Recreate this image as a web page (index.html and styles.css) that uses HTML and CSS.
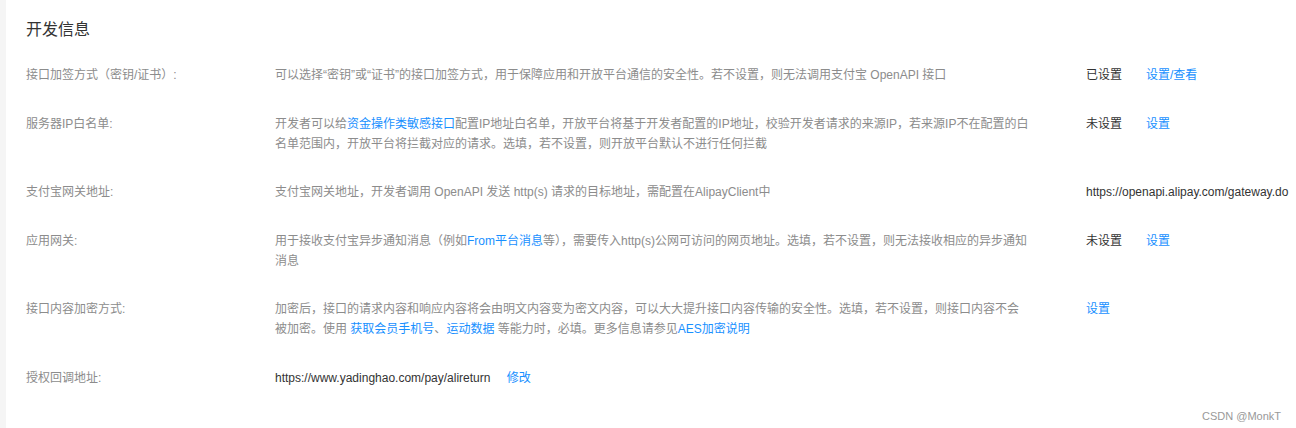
FILE: index.html
```html
<!DOCTYPE html>
<html lang="zh-CN">
<head>
  <meta charset="UTF-8" />
  <meta name="viewport" content="width=device-width, initial-scale=1.0" />
  <title>开发信息</title>
  <link rel="stylesheet" href="styles.css">
</head>
<body>
  <div class="panel">
    <h2 class="panel-title">开发信息</h2>
    <div class="info-list">
      <div class="info-row">
        <div class="info-label">接口加签方式（密钥/证书）:</div>
        <div class="info-desc">可以选择“密钥”或“证书”的接口加签方式，用于保障应用和开放平台通信的安全性。若不设置，则无法调用支付宝 OpenAPI 接口</div>
        <div class="info-action">
          <span class="status">已设置</span>
          <a class="link" href="#">设置/查看</a>
        </div>
      </div>
      <div class="info-row">
        <div class="info-label">服务器IP白名单:</div>
        <div class="info-desc">开发者可以给<a class="link" href="#">资金操作类敏感接口</a>配置IP地址白名单，开放平台将基于开发者配置的IP地址，校验开发者请求的来源IP，若来源IP不在配置的白名单范围内，开放平台将拦截对应的请求。选填，若不设置，则开放平台默认不进行任何拦截</div>
        <div class="info-action">
          <span class="status">未设置</span>
          <a class="link" href="#">设置</a>
        </div>
      </div>
      <div class="info-row">
        <div class="info-label">支付宝网关地址:</div>
        <div class="info-desc">支付宝网关地址，开发者调用 OpenAPI 发送 http(s) 请求的目标地址，需配置在AlipayClient中</div>
        <div class="info-action">
          <span class="value">https://openapi.alipay.com/gateway.do</span>
        </div>
      </div>
      <div class="info-row">
        <div class="info-label">应用网关:</div>
        <div class="info-desc">用于接收支付宝异步通知消息（例如<a class="link" href="#">From平台消息</a>等），需要传入http(s)公网可访问的网页地址。选填，若不设置，则无法接收相应的异步通知消息</div>
        <div class="info-action">
          <span class="status">未设置</span>
          <a class="link" href="#">设置</a>
        </div>
      </div>
      <div class="info-row">
        <div class="info-label">接口内容加密方式:</div>
        <div class="info-desc">加密后，接口的请求内容和响应内容将会由明文内容变为密文内容，可以大大提升接口内容传输的安全性。选填，若不设置，则接口内容不会被加密。使用 <a class="link" href="#">获取会员手机号</a>、<a class="link" href="#">运动数据</a> 等能力时，必填。更多信息请参见<a class="link" href="#">AES加密说明</a></div>
        <div class="info-action">
          <a class="link" href="#">设置</a>
        </div>
      </div>
      <div class="info-row">
        <div class="info-label">授权回调地址:</div>
        <div class="info-desc">
          <span class="value">https://www.yadinghao.com/pay/alireturn</span>
          <a class="link edit" href="#">修改</a>
        </div>
        <div class="info-action"></div>
      </div>
    </div>
    <div class="watermark">CSDN @MonkT</div>
  </div>
</body>
</html>
```

FILE: styles.css
```css
body {
  margin: 0;
  background-color: #f5f5f5;
  font-family: "Liberation Sans", "Noto Sans CJK SC", sans-serif;
  font-size: 12px;
  color: #333;
}
.panel {
  position: relative;
  margin-left: 6px;
  height: 428px;
  background-color: #fff;
  padding: 18px 0 0 20px;
  box-sizing: border-box;
}
.panel-title {
  margin: 0;
  font-size: 16px;
  font-weight: normal;
  line-height: 24px;
  color: #333;
}
.info-list {
  margin-top: 9px;
}
.info-row {
  display: grid;
  grid-template-columns: 249px 811px 1fr;
  padding: 14px 0 14.5px;
  line-height: 20px;
}
.info-label {
  color: #8c8c8c;
}
.info-desc {
  color: #8c8c8c;
  padding-right: 56px;
}
.info-action {
  display: flex;
  gap: 24px;
  white-space: nowrap;
}
.status {
  color: #333;
}
.value {
  color: #333;
}
.link {
  color: #1890ff;
  text-decoration: none;
}
.edit {
  margin-left: 13px;
}
.watermark {
  position: absolute;
  right: 15px;
  bottom: 6px;
  font-size: 11px;
  color: #999;
}
```
